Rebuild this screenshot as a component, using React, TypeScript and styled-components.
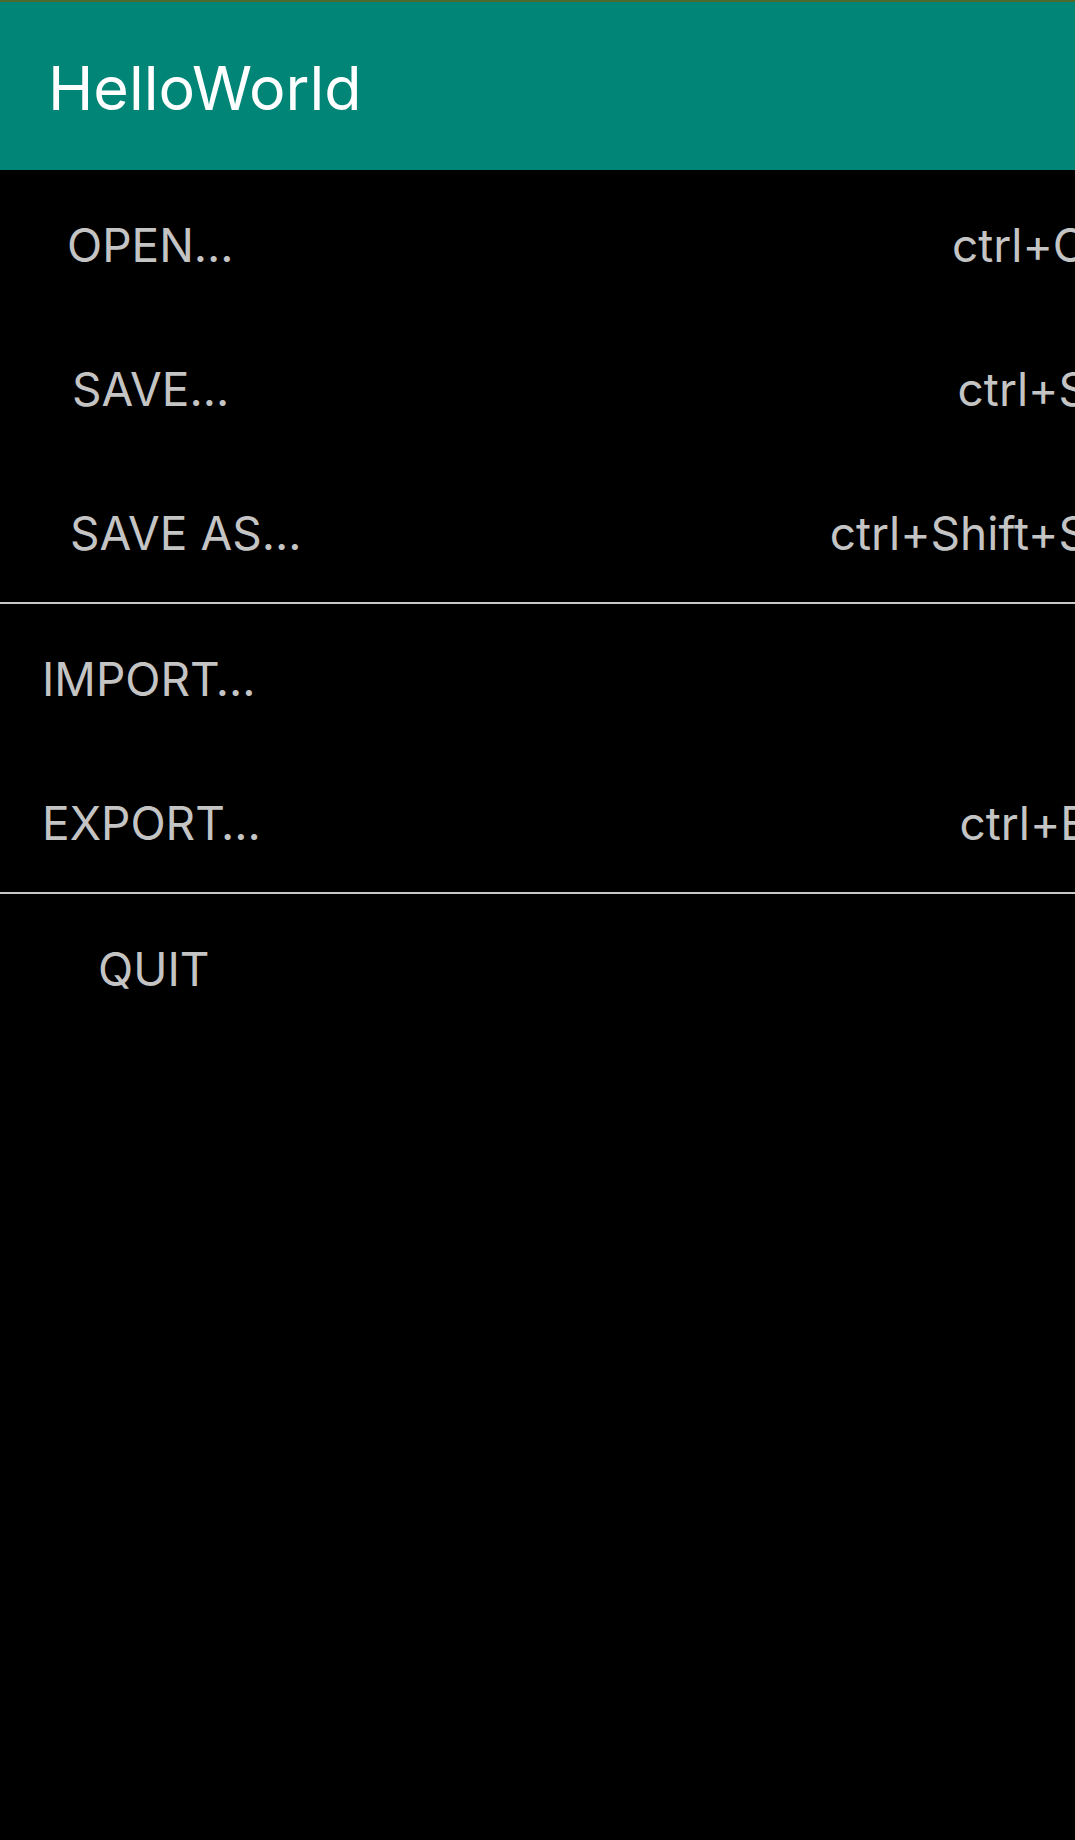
import React from "react";
import styled, { createGlobalStyle } from "styled-components";

const Global = createGlobalStyle`
  html, body {
    margin: 0;
    padding: 0;
    background: #000000;
  }
  body {
    font-family: Inter, Roboto, "Liberation Sans", Arial, sans-serif;
    overflow-x: hidden;
  }
`;

const Screen = styled.div`
  width: 1075px;
  min-height: 1840px;
  background: #000000;
  display: flex;
  flex-direction: column;
  overflow: hidden;
`;

const StatusStrip = styled.div`
  height: 2px;
  background: #4f6b2b;
`;

const Toolbar = styled.header`
  height: 168px;
  background: #008577;
  display: flex;
  align-items: center;
  padding-left: 48px;
  box-sizing: border-box;
`;

const Title = styled.h1`
  margin: 0;
  font-family: Inter, Roboto, "Liberation Sans", Arial, sans-serif;
  font-weight: 400;
  font-size: 61px;
  color: #ffffff;
  line-height: 1;
  padding-top: 4px;
`;

const Menu = styled.nav`
  display: flex;
  flex-direction: column;
  margin-right: -13px;
`;

const Group = styled.div`
  display: flex;
  flex-direction: column;
`;

const Divider = styled.hr`
  margin: 0;
  border: 0;
  height: 2px;
  background: #c8c8c8;
`;

const Row = styled.div`
  height: 144px;
  display: flex;
  align-items: center;
  justify-content: space-between;
  color: #c4c4c4;
  font-size: 46px;
  font-weight: 400;
  line-height: 1;
  padding-top: 5px;
  box-sizing: border-box;
`;

const Label = styled.span<{ $indent: number }>`
  padding-left: ${(p) => p.$indent}px;
  white-space: nowrap;
`;

const Shortcut = styled.span`
  white-space: nowrap;
`;

type Item = { label: string; indent: number; shortcut?: string };

const groups: Item[][] = [
  [
    { label: "OPEN…", indent: 67, shortcut: "ctrl+O" },
    { label: "SAVE…", indent: 72, shortcut: "ctrl+S" },
    { label: "SAVE AS…", indent: 70, shortcut: "ctrl+Shift+S" },
  ],
  [
    { label: "IMPORT…", indent: 42 },
    { label: "EXPORT…", indent: 42, shortcut: "ctrl+E" },
  ],
  [{ label: "QUIT", indent: 98 }],
];

export default function App() {
  return (
    <Screen>
      <Global />
      <StatusStrip />
      <Toolbar>
        <Title>HelloWorld</Title>
      </Toolbar>
      <Menu>
        {groups.map((g, gi) => (
          <React.Fragment key={gi}>
            {gi > 0 && <Divider />}
            <Group>
              {g.map((it) => (
                <Row key={it.label}>
                  <Label $indent={it.indent}>{it.label}</Label>
                  {it.shortcut && <Shortcut>{it.shortcut}</Shortcut>}
                </Row>
              ))}
            </Group>
          </React.Fragment>
        ))}
      </Menu>
    </Screen>
  );
}
